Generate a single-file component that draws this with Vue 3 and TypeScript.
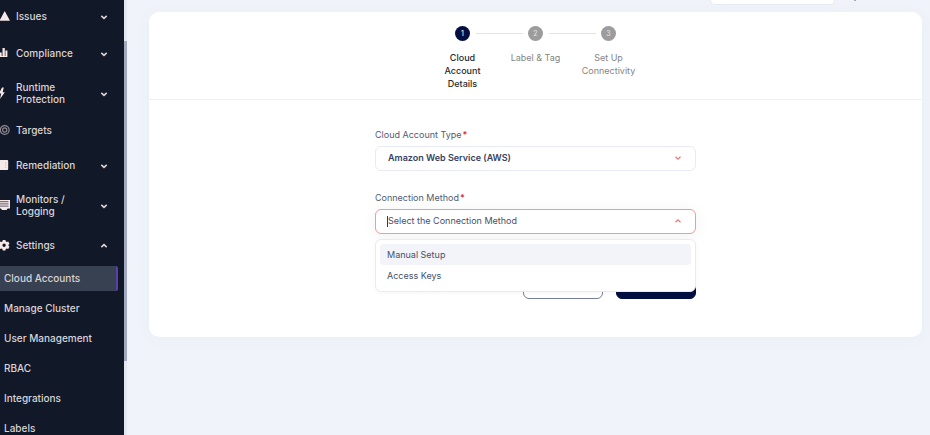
<script setup lang="ts">
import { ref } from 'vue'

interface NavItem {
  label: string
  icon: string
  chevron?: 'up' | 'down'
  size?: 'double' | 'plain'
}

const navItems: NavItem[] = [
  { label: 'Issues', icon: 'warning', chevron: 'down' },
  { label: 'Compliance', icon: 'chart', chevron: 'down' },
  { label: 'Runtime Protection', icon: 'bolt', chevron: 'down', size: 'double' },
  { label: 'Targets', icon: 'target', size: 'plain' },
  { label: 'Remediation', icon: 'panel', chevron: 'down' },
  { label: 'Monitors / Logging', icon: 'monitor', chevron: 'down', size: 'double' },
  { label: 'Settings', icon: 'gear', chevron: 'up' },
]

const settingsLinks = ['Cloud Accounts', 'Manage Cluster', 'User Management', 'RBAC', 'Integrations', 'Labels']
const activeLink = ref('Cloud Accounts')

const steps = ['Cloud Account Details', 'Label & Tag', 'Set Up Connectivity']
const currentStep = ref(0)

const accountType = ref('Amazon Web Service (AWS)')
const method = ref('')
const methods = ['Manual Setup', 'Access Keys']
const menuOpen = ref(true)
const highlighted = ref(0)

function choose(option: string) {
  method.value = option
  menuOpen.value = false
}
</script>

<template>
  <div class="shell">
    <aside class="sidebar">
      <nav class="nav">
        <button v-for="item in navItems" :key="item.label" type="button" class="nav-item" :class="item.size">
          <svg class="nav-icon" viewBox="0 0 12 12" aria-hidden="true">
            <path v-if="item.icon === 'warning'" d="M6.700 1 12 10.800H1.400Z" />
            <path v-else-if="item.icon === 'chart'" d="M1 5.500h2.700V9h.8V1h2.300v8h.6V3.500h2V10H1z" />
            <path v-else-if="item.icon === 'bolt'" d="M4 .5 1 6.600h2.200L2 12l4.800-6.800H4.600L5.800.5Z" />
            <g v-else-if="item.icon === 'target'" class="rings">
              <circle cx="6.700" cy="6" r="4.400" />
              <circle cx="6.700" cy="6" r="2.100" />
            </g>
            <g v-else-if="item.icon === 'panel'">
              <path d="M0 1h9.200q1 0 1 1v8q0 1-1 1H0z" />
              <path class="detail" d="M7.300 3.200h1v1h-1zM7.300 5.500h1v1h-1zM7.300 7.800h1v1h-1z" />
            </g>
            <g v-else-if="item.icon === 'monitor'">
              <path d="M0 1h12v8.500H9.700L8.500 11H4L3 9.500H0z" />
              <path class="screen" d="M1.500 2.700h9M1.500 4.900h9M1.500 7.100h9" />
            </g>
            <path v-else fill-rule="evenodd" d="M4.800 1h2.600l.4 1.500 1 .5 1.400-.4 1.300 2.200-1 1v1l1 1-1.300 2.200-1.400-.4-1 .5-.4 1.400H4.800l-.4-1.400-1-.5-1.400.4L.7 7.800l1-1v-1l-1-1L2 2.600l1.400.4 1-.5zM6.100 4.600a1.700 1.700 0 1 0 0 3.400 1.700 1.700 0 0 0 0-3.400z" />
          </svg>
          <span class="nav-label">{{ item.label }}</span>
          <svg v-if="item.chevron" class="nav-chevron" :class="item.chevron" viewBox="0 0 8 8" aria-hidden="true">
            <path d="M1.300 2.800 4 5.300l2.700-2.500" />
          </svg>
        </button>
        <ul class="subnav">
          <li v-for="link in settingsLinks" :key="link">
            <a href="#" class="sub-link" :class="{ active: link === activeLink }" @click.prevent="activeLink = link">{{ link }}</a>
          </li>
        </ul>
      </nav>
      <div class="scroll-track"><div class="scroll-thumb"></div></div>
    </aside>

    <main class="content">
      <header class="topbar">
        <div class="top-field"></div>
        <span class="top-mark"></span>
      </header>
      <section class="card">
        <ol class="steps">
          <li v-for="(step, i) in steps" :key="step" class="step" :class="{ current: i === currentStep }">
            <span class="dot">{{ i + 1 }}</span>
            <span class="step-label">{{ step }}</span>
          </li>
        </ol>
        <form class="form" @submit.prevent>
          <div class="field">
            <label for="account-type">Cloud Account Type<span class="required">*</span></label>
            <div class="control">
              <select id="account-type" v-model="accountType" class="input strong">
                <option>Amazon Web Service (AWS)</option>
              </select>
              <svg class="caret" viewBox="0 0 8 8" aria-hidden="true"><path d="M1.500 2.800 4 5.200l2.500-2.400" /></svg>
            </div>
          </div>
          <div class="field">
            <label for="method">Connection Method<span class="required">*</span></label>
            <div class="control">
              <input
                id="method"
                v-model="method"
                class="input open"
                type="text"
                role="combobox"
                :aria-expanded="menuOpen"
                aria-controls="method-menu"
                placeholder="Select the Connection Method"
                @focus="menuOpen = true"
              />
              <span v-if="menuOpen" class="text-cursor"></span>
              <svg class="caret up" viewBox="0 0 8 8" aria-hidden="true"><path d="M1.500 2.800 4 5.200l2.500-2.400" /></svg>
              <ul v-if="menuOpen" id="method-menu" class="menu" role="listbox">
                <li
                  v-for="(option, i) in methods"
                  :key="option"
                  class="option"
                  :class="{ highlighted: i === highlighted }"
                  role="option"
                  :aria-selected="method === option"
                  @mouseenter="highlighted = i"
                  @click="choose(option)"
                >{{ option }}</li>
              </ul>
            </div>
          </div>
          <div class="actions">
            <button type="button" class="action" aria-label="Cancel"></button>
            <button type="submit" class="action primary" aria-label="Continue"></button>
          </div>
        </form>
      </section>
    </main>
  </div>
</template>

<style>
body {
  background: #f0f4fa;
}
</style>

<style scoped>
* {
  box-sizing: border-box;
}

.shell {
  display: flex;
  height: 100vh;
  overflow: hidden;
  font-family: Inter, "Liberation Sans", sans-serif;
  font-size: 9px;
  line-height: 12px;
  color: #37415f;
}

ul,
ol {
  list-style: none;
  margin: 0;
  padding: 0;
}

button,
input,
select {
  font: inherit;
}

.sidebar {
  display: flex;
  flex: none;
  width: 127px;
  overflow: hidden;
}

.nav {
  flex: 1;
  margin-top: -3px;
  background: #111827;
}

.nav-item {
  display: flex;
  align-items: center;
  width: 100%;
  height: 37px;
  padding: 0 16px 0 0;
  border: 0;
  background: none;
  color: #dad4d8;
  font-size: 10px;
  font-weight: 500;
  text-align: left;
}

.nav-item.double {
  height: 43px;
}

.nav-item.plain {
  height: 32px;
}

.nav-icon {
  flex: none;
  width: 12px;
  height: 12px;
  margin: 0 6px 0 -2px;
  fill: #f8e9e9;
}

.nav-icon .rings {
  fill: none;
  stroke: #8f8b92;
  stroke-width: 1.2;
}

.nav-icon .detail {
  fill: #b9adb2;
}

.nav-icon .screen {
  stroke: #5d5b66;
  stroke-width: 1;
}

.nav-label {
  width: 64px;
}

.nav-chevron {
  width: 8px;
  height: 8px;
  margin-left: auto;
  margin-top: 2px;
  fill: none;
  stroke: #dad4d8;
  stroke-width: 1.6;
}

.nav-chevron.up,
.caret.up {
  transform: rotate(180deg);
}

.subnav {
  display: grid;
  gap: 5px;
  padding: 3px 6px 0 0;
}

.sub-link {
  display: block;
  height: 25px;
  padding-left: 4px;
  border-right: 2px solid transparent;
  border-radius: 0 2px 2px 0;
  color: #dad4d8;
  font-size: 10px;
  font-weight: 500;
  line-height: 25px;
  text-decoration: none;
}

.sub-link.active {
  background: #374151;
  border-color: #5b3fa8;
}

.scroll-track {
  width: 3px;
  padding-top: 41px;
  background: #e4e8f0;
}

.scroll-thumb {
  height: 320px;
  background: #a3a9c1;
}

.content {
  flex: 1;
  min-width: 0;
  padding: 0 8px 0 22px;
}

.topbar {
  display: flex;
  justify-content: flex-end;
  gap: 19px;
  height: 12px;
  padding-right: 66px;
}

.top-field {
  width: 125px;
  height: 5px;
  background: #fff;
  border: 1px solid #e6eaf1;
  border-top: 0;
  border-radius: 0 0 5px 5px;
}

.top-mark {
  width: 2px;
  height: 1px;
  background: #a5a9b1;
}

.card {
  padding-bottom: 38px;
  background: #fff;
  border-radius: 10px;
  box-shadow: 0 2px 16px rgba(40, 50, 90, 0.04);
}

.steps {
  display: flex;
  justify-content: center;
  height: 88px;
  padding-top: 14px;
  border-bottom: 1px solid #f0f0f2;
}

.step {
  position: relative;
  display: flex;
  flex-direction: column;
  align-items: center;
  width: 73px;
  color: #858585;
  line-height: 13px;
  text-align: center;
}

.step + .step::before {
  content: "";
  position: absolute;
  top: 7px;
  right: calc(50% + 13px);
  width: 47px;
  height: 1px;
  background: #e3e3e3;
}

.dot {
  width: 15px;
  height: 15px;
  margin-bottom: 10px;
  border-radius: 50%;
  background: #9c9c9c;
  color: #e6e6e6;
  font-size: 7px;
  line-height: 15px;
}

.step-label {
  max-width: 56px;
}

.step.current {
  color: #292929;
  font-weight: 500;
}

.step.current .step-label {
  max-width: 44px;
}

.step.current .dot {
  background: #020f40;
}

.form {
  width: 321px;
  margin: 0 auto;
  padding-top: 29px;
}

.field {
  margin-bottom: 21px;
}

.field label {
  display: block;
  margin-bottom: 5px;
  color: #515b73;
}

.required {
  margin-left: 1px;
  color: #e02b35;
  font-weight: 600;
}

.control {
  position: relative;
}

.input {
  display: block;
  width: 100%;
  height: 25px;
  padding: 0 28px 2px 12px;
  border: 1px solid #e8ebf3;
  border-radius: 6px;
  outline: 0;
  appearance: none;
  background: #fff;
  color: #37415f;
}

.input.strong {
  font-weight: 600;
}

.input.open {
  border-color: #f29a9a;
  box-shadow: 0 2px 16px rgba(30, 30, 60, 0.06);
}

.input::placeholder {
  color: #465069;
  opacity: 1;
}

.text-cursor {
  position: absolute;
  top: 7px;
  left: 12px;
  width: 1px;
  height: 11px;
  background: #343c52;
}

.caret {
  position: absolute;
  top: 8px;
  right: 14px;
  width: 8px;
  height: 8px;
  fill: none;
  stroke: #ec7474;
  stroke-width: 1.2;
  pointer-events: none;
}

.menu {
  position: absolute;
  z-index: 1;
  top: 30px;
  left: 0;
  right: 0;
  padding: 4px 4px 5px;
  border: 1px solid #e8ebf3;
  border-radius: 6px;
  background: #fff;
  box-shadow: 0 1px 4px rgba(30, 30, 60, 0.04);
}

.option {
  height: 21px;
  padding-left: 7px;
  border-radius: 4px;
  line-height: 21px;
  color: #465069;
}

.option.highlighted {
  background: #f2f4fa;
}

.actions {
  display: flex;
  justify-content: flex-end;
  gap: 13px;
  padding-top: 14px;
}

.action {
  width: 80px;
  height: 30px;
  border: 1px solid #767d9c;
  border-radius: 6px;
  background: #fff;
}

.action.primary {
  border-color: #020f40;
  background: #020f40;
}
</style>
